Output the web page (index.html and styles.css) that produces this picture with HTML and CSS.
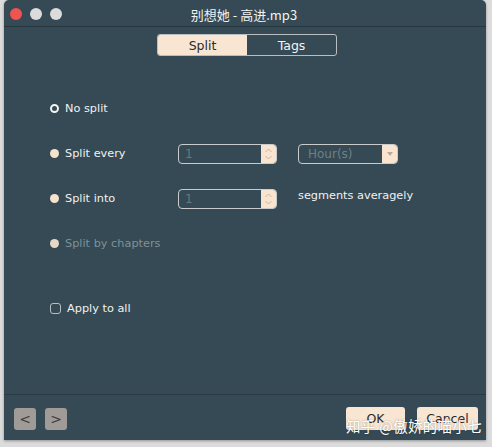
FILE: index.html
```html
<!DOCTYPE html>
<html>
<head>
<meta charset="utf-8">
<link rel="stylesheet" href="styles.css">
</head>
<body>
<div class="window">
  <div class="titlebar">
    <div class="lights">
      <span class="light red"></span>
      <span class="light"></span>
      <span class="light"></span>
    </div>
    <div class="title">别想她 - 高进.mp3</div>
  </div>
  <div class="tabs">
    <div class="tab active">Split</div>
    <div class="tab">Tags</div>
  </div>
  <div class="content">
    <div class="row">
      <span class="radio checked"></span><span class="label">No split</span>
    </div>
    <div class="row">
      <span class="radio"></span><span class="label wide">Split every</span>
      <div class="spin"><span class="val">1</span><span class="stepper"><svg width="9" height="14" viewBox="0 0 9 14"><path d="M1.5 5 L4.5 2 L7.5 5 M1.5 9 L4.5 12 L7.5 9" fill="none" stroke="#c9b7a4" stroke-width="1"/></svg></span></div>
      <div class="select"><span class="val">Hour(s)</span><span class="arrow"><svg width="8" height="6" viewBox="0 0 8 6"><path d="M1 1 L7 1 L4 5 Z" fill="#b8aa9c"/></svg></span></div>
    </div>
    <div class="row">
      <span class="radio"></span><span class="label wide">Split into</span>
      <div class="spin"><span class="val">1</span><span class="stepper"><svg width="9" height="14" viewBox="0 0 9 14"><path d="M1.5 5 L4.5 2 L7.5 5 M1.5 9 L4.5 12 L7.5 9" fill="none" stroke="#c9b7a4" stroke-width="1"/></svg></span></div>
      <span class="label seg">segments averagely</span>
    </div>
    <div class="row">
      <span class="radio dim"></span><span class="label disabled">Split by chapters</span>
    </div>
    <div class="row check-row">
      <span class="checkbox"></span><span class="label">Apply to all</span>
    </div>
  </div>
  <div class="footer">
    <div class="nav">
      <span class="navbtn">&lt;</span>
      <span class="navbtn">&gt;</span>
    </div>
    <div class="actions">
      <span class="btn ok">OK</span>
      <span class="btn cancel">Cancel</span>
    </div>
    <div class="watermark">知乎 @傲娇的喵小七</div>
  </div>
</div>
</body>
</html>
```
FILE: styles.css
```css
html, body {
  margin: 0;
  padding: 0;
}
body {
  background: #dcdcdc;
  width: 492px;
  height: 447px;
  overflow: hidden;
  font-family: "DejaVu Sans", Verdana, sans-serif;
}
.window {
  margin-left: 4px;
  width: 482px;
  height: 440px;
  background: #354a54;
  border-radius: 5px 5px 0 0;
  display: flex;
  flex-direction: column;
  position: relative;
  box-shadow: 0 1px 3px rgba(0,0,0,0.35);
}
.titlebar {
  height: 26px;
  border-bottom: 1px solid #26363e;
  position: relative;
  display: flex;
  align-items: center;
  justify-content: center;
}
.lights {
  position: absolute;
  left: 6px;
  top: 8px;
  display: flex;
  gap: 8px;
}
.light {
  width: 12px;
  height: 12px;
  border-radius: 50%;
  background: #dcdcdc;
}
.light.red {
  background: #f05450;
}
.title {
  color: #f2f2f2;
  font-family: "Noto Sans CJK SC", "DejaVu Sans", sans-serif;
  font-size: 13px;
  margin-left: -2px;
  margin-top: 2px;
}
.tabs {
  align-self: flex-start;
  margin: 7px 0 0 153px;
  display: flex;
  border: 1px solid #b9bec0;
  border-radius: 3px;
  height: 20px;
  overflow: hidden;
}
.tab {
  width: 89px;
  display: flex;
  align-items: center;
  justify-content: center;
  font-size: 12.5px;
  color: #f4f4f4;
}
.tab.active {
  background: #f8e6d3;
  color: #2a2a2a;
}
.content {
  padding: 30px 0 0 46px;
  display: flex;
  flex-direction: column;
}
.row {
  height: 45px;
  display: flex;
  align-items: center;
}
.check-row {
  margin-top: 20px;
}
.radio {
  width: 9px;
  height: 9px;
  border-radius: 50%;
  background: #f7e2cc;
  margin-right: 6px;
  box-sizing: border-box;
}
.radio.checked {
  background: #354a54;
  border: 2.5px solid #f4f4f4;
}
.radio.dim {
  background: #e9d8c6;
}
.checkbox {
  width: 11px;
  height: 11px;
  border: 1px solid #b8bfc2;
  border-radius: 3px;
  box-sizing: border-box;
  margin-right: 6px;
}
.label {
  color: #f1f1f1;
  font-size: 11.3px;
  margin-top: -1px;
}
.label.wide {
  width: 113px;
}
.label.disabled {
  color: #7f9198;
}
.label.seg {
  margin-left: 21px;
  margin-top: -6px;
}
.spin, .select {
  height: 20px;
  box-sizing: border-box;
  border: 1px solid #c9ccca;
  border-radius: 4px;
  display: flex;
  align-items: center;
  overflow: hidden;
}
.spin {
  width: 99px;
}
.select {
  width: 100px;
  margin-left: 21px;
}
.val {
  flex: 1;
  color: #65787f;
  font-size: 12px;
  padding-left: 6px;
}
.select .val {
  padding-left: 9px;
  color: #6e8086;
}
.stepper, .arrow {
  width: 15px;
  height: 100%;
  background: #f8e4cf;
  display: flex;
  align-items: center;
  justify-content: center;
}
.footer {
  margin-top: auto;
  height: 45px;
  border-top: 1px solid #2a3b43;
  display: flex;
  align-items: center;
  justify-content: space-between;
  padding: 0 8px 0 10px;
  position: relative;
}
.nav {
  display: flex;
  gap: 9px;
  margin-top: 2px;
}
.navbtn {
  width: 22px;
  height: 22px;
  background: #a09b96;
  border-radius: 3px;
  display: flex;
  align-items: center;
  justify-content: center;
  color: #3d3d3d;
  font-size: 14px;
}
.actions {
  display: flex;
  gap: 12px;
  margin-top: 1px;
}
.btn {
  height: 23px;
  background: #f8e6d3;
  border-radius: 3px;
  display: flex;
  align-items: center;
  justify-content: center;
  font-size: 12.5px;
  color: #2a2a2a;
}
.btn.ok {
  width: 59px;
}
.btn.cancel {
  width: 61px;
}
.watermark {
  position: absolute;
  left: 342px;
  top: 20px;
  color: #ffffff;
  font-family: "Noto Sans CJK SC", sans-serif;
  font-size: 14.5px;
  letter-spacing: 0.3px;
  text-shadow: 0 0 2px rgba(0,0,0,0.4);
}
```
